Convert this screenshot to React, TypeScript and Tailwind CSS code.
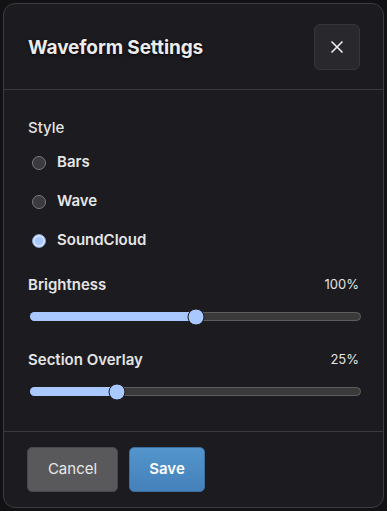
import { X } from "lucide-react";

const styles = ["Bars", "Wave", "SoundCloud"];

function Radio({ label, checked }: { label: string; checked?: boolean }) {
    return (
        <div className="flex items-center h-[39px] pl-[4px]">
            {checked ? (
                <span className="w-[14px] h-[14px] rounded-full bg-[#a8c8ff] border border-[#7f9fd0] shadow-[inset_0_0_0_1.5px_#e4ecfa]" />
            ) : (
                <span className="w-[14px] h-[14px] rounded-full bg-[#3b3b3e] border-[1.5px] border-[#7a7a7e]" />
            )}
            <span className="ml-[11px] text-[15px] font-semibold text-[#e6e6e6]">{label}</span>
        </div>
    );
}

function Slider({ label, value, pct }: { label: string; value: string; pct: number }) {
    return (
        <div>
            <div className="flex items-center justify-between h-[20px]">
                <span className="text-[15px] font-semibold text-[#e4e4e4]">{label}</span>
                <span className="text-[13px] text-[#e4e4e4]">{value}</span>
            </div>
            <div className="relative mt-[17px] ml-[2px] -mr-[2px] h-[9px] rounded-full bg-[#3a3a3a] border border-[#5e5e5e]">
                <div className="absolute -left-px -top-px h-[9px] rounded-full bg-[#a8c8ff]" style={{ width: `${pct}%` }} />
                <div
                    className="absolute top-1/2 w-[17px] h-[17px] -translate-x-1/2 -translate-y-1/2 rounded-full bg-[#a8c8ff] border border-[#1a1a1d]"
                    style={{ left: `${pct}%` }}
                />
            </div>
        </div>
    );
}

export default function App() {
    return (
        <div className="w-[387px] h-[511px] bg-[#121214] p-[3px] font-['Inter',sans-serif]">
            <div className="h-full flex flex-col rounded-xl border border-[#3c3c41] bg-[#1c1b20]">
                <div className="h-[86px] flex items-center justify-between pl-[24px] pr-[23px] border-b border-[#3a3a3f]">
                    <h1 className="pt-[3px] text-[19px] font-bold tracking-[-0.1px] text-[#ececec] [text-shadow:0_1px_3px_rgba(0,0,0,0.9)]">
                        Waveform Settings
                    </h1>
                    <button className="w-[46px] h-[46px] flex items-center justify-center rounded-md bg-[#29292d] border border-[#35353a]">
                        <X className="w-[20px] h-[20px] text-[#ececec]" strokeWidth={2} />
                    </button>
                </div>
                <div className="flex-1 px-[24px] pt-[28px]">
                    <div className="text-[15px] font-medium text-[#e4e4e4] h-[20px] flex items-center">Style</div>
                    <div className="mt-[5px]">
                        {styles.map((s) => (
                            <Radio key={s} label={s} checked={s === "SoundCloud"} />
                        ))}
                    </div>
                    <div className="mt-[15px]">
                        <Slider label="Brightness" value="100%" pct={50} />
                    </div>
                    <div className="mt-[29px]">
                        <Slider label="Section Overlay" value="25%" pct={26} />
                    </div>
                </div>
                <div className="h-[76px] border-t border-[#3a3a3f] flex items-start gap-[11px] pl-[23px] pt-[15px]">
                    <button className="w-[91px] h-[45px] rounded-[5px] bg-[#59595c] border border-[#48484b] text-[15px] text-[#e8e8e8]">
                        Cancel
                    </button>
                    <button className="w-[76px] h-[45px] rounded-[5px] bg-gradient-to-b from-[#5395cc] to-[#4581ba] border border-[#3d6f9e] text-[15px] font-semibold text-white">
                        Save
                    </button>
                </div>
            </div>
        </div>
    );
}
